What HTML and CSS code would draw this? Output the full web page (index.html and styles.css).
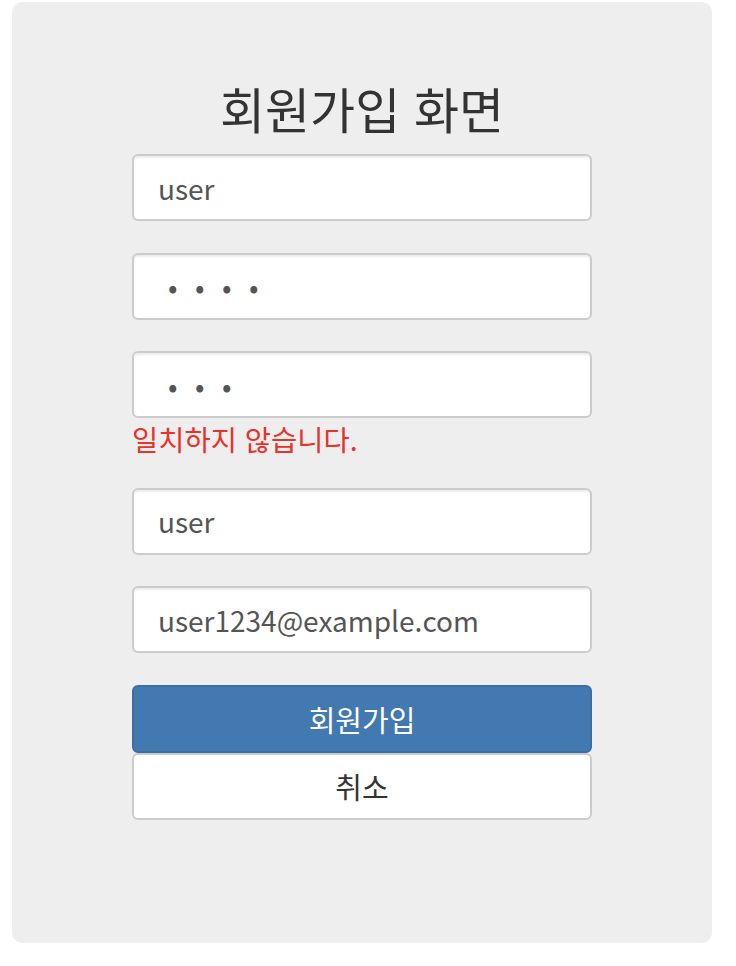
FILE: index.html
```html
<!DOCTYPE html>
<html lang="ko">
<head>
<meta charset="utf-8">
<title>회원가입 화면</title>
<link rel="stylesheet" href="styles.css">
</head>
<body>
<div class="panel">
  <h1 class="title">회원가입 화면</h1>
  <form class="form">
    <div class="field"><input class="control" type="text" value="user"></div>
    <div class="field"><input class="control pw" type="password" value="1234"></div>
    <div class="field"><input class="control pw" type="password" value="123"><p class="error">일치하지 않습니다.</p></div>
    <div class="field"><input class="control" type="text" value="user"></div>
    <div class="field"><input class="control" type="text" value="user1234@example.com"></div>
    <div class="actions">
      <button type="button" class="btn btn-primary">회원가입</button>
      <button type="button" class="btn btn-default">취소</button>
    </div>
  </form>
</div>
</body>
</html>
```
FILE: styles.css
```css
html, body {
  margin: 0;
  padding: 0;
  background: #fff;
}
body {
  font-family: "Noto Sans CJK KR", "Noto Sans", sans-serif;
  padding: 2px 0 0 12px;
}
.panel {
  width: 700px;
  height: 941px;
  box-sizing: border-box;
  background: #eeeeee;
  border-radius: 10px;
  padding-top: 75px;
}
.title {
  margin: 0 0 15px;
  text-align: center;
  font-weight: 400;
  font-size: 49px;
  line-height: 62px;
  color: #333;
}
.form {
  width: 460px;
  margin: 0 auto 0 120px;
  display: flex;
  flex-direction: column;
}
.field {
  margin-bottom: 31.5px;
}
.control {
  display: block;
  width: 460px;
  height: 67px;
  box-sizing: border-box;
  border: 2px solid #cccccc;
  border-radius: 6px;
  background: #fff;
  padding: 0 24px;
  font-family: "Noto Sans CJK KR", "Noto Sans", sans-serif;
  font-size: 28px;
  color: #555;
  box-shadow: inset 0 2px 2px rgba(0,0,0,0.075);
  outline: none;
}
.pw {
  letter-spacing: 17.5px;
  padding-left: 34px;
}
.error {
  margin: 4px 0 0;
  font-size: 28.5px;
  line-height: 34px;
  color: #e8322a;
}
.actions {
  display: flex;
  flex-direction: column;
}
.btn {
  display: block;
  width: 460px;
  height: 68px;
  box-sizing: border-box;
  border-radius: 6px;
  font-family: "Noto Sans CJK KR", "Noto Sans", sans-serif;
  font-size: 29px;
  padding: 0;
}
.btn-primary {
  background: #4279b1;
  border: 2px solid #3b6ea3;
  color: #fff;
}
.btn-default {
  background: #fff;
  border: 2px solid #cccccc;
  color: #333;
  height: 67px;
}
```
